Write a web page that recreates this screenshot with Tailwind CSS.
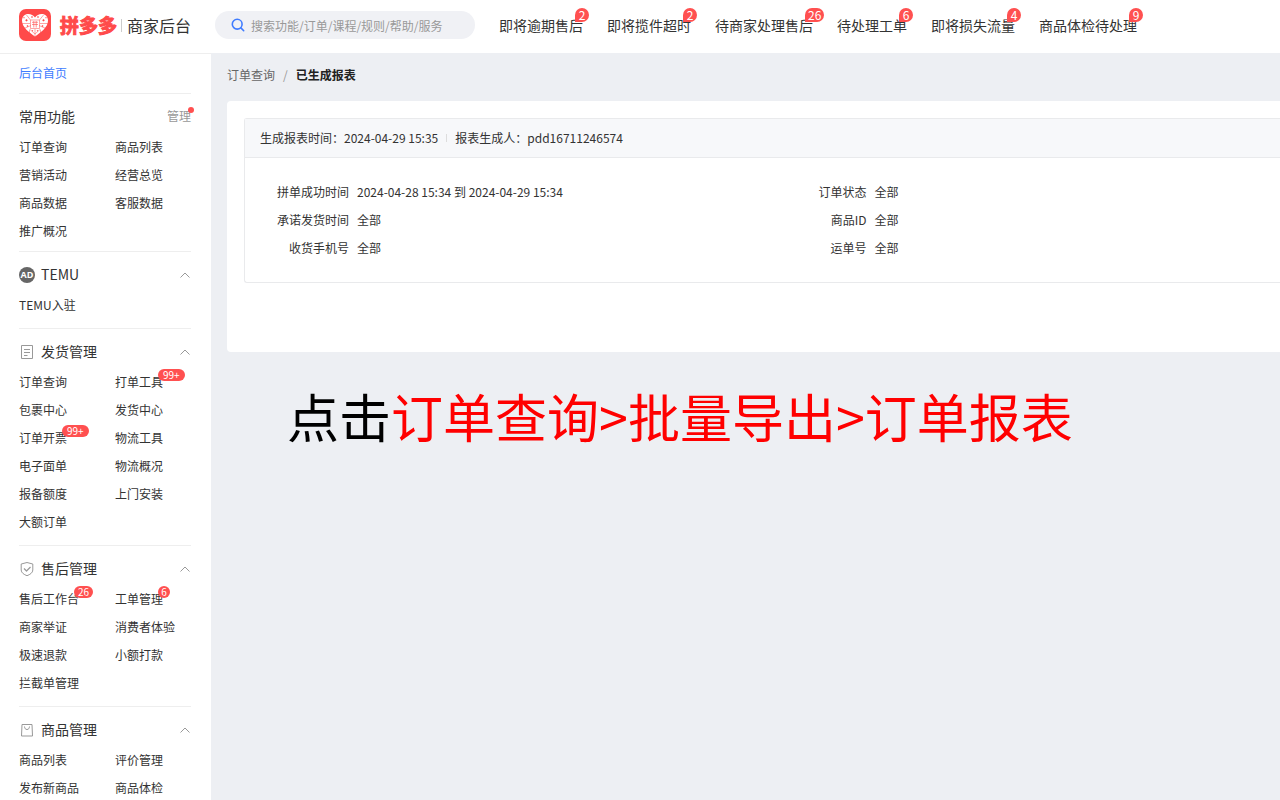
<!DOCTYPE html>
<html lang="zh-CN">
<head>
  <meta charset="UTF-8" />
  <meta name="viewport" content="width=device-width, initial-scale=1.0" />
  <title>拼多多 商家后台</title>
  <script src="https://cdn.jsdelivr.net/npm/@tailwindcss/browser@4"></script>
</head>
<body class="h-screen flex flex-col overflow-hidden bg-[#edeff3] font-['Noto_Sans_CJK_SC',sans-serif] text-xs text-[#333]">

  <!-- Shared icons -->
  <svg class="hidden" xmlns="http://www.w3.org/2000/svg">
    <symbol id="chevron" viewBox="0 0 12 12">
      <path d="M1.500 8.500 6 4l4.500 4.500" fill="none" stroke="#999" stroke-width="1" />
    </symbol>
  </svg>

  <!-- Header -->
  <header class="h-[53px] shrink-0 flex items-center bg-white pl-[19px] pb-[3px] whitespace-nowrap">
    <a href="#" class="w-49 shrink-0 flex items-center">
      <svg class="size-8 shrink-0" viewBox="0 0 32 32">
        <rect width="32" height="32" rx="7" fill="#ff4a4a" />
        <path d="M16 27.500C10.500 23.800 3 18.500 3 11.600 3 7.600 5.800 5 9.300 5c2.800 0 5.100 1.300 6.700 3.500C17.600 6.300 19.900 5 22.700 5 26.200 5 29 7.600 29 11.600 29 18.500 21.500 23.800 16 27.500z" fill="#fff" />
        <g fill="none" stroke="#ff4a4a" stroke-width=".5">
          <path d="M3 14.500h8M21 14.500h8M7.500 6l4 5M24.500 6l-4 5M5 19.500l7-3M27 19.500l-7-3M10.500 20.500v3.500M21.500 20.500v3.500M16 20v7M11 20.500 16 25l5-4.500" />
          <path d="M11.500 11h9v8.500h-9z" />
        </g>
        <g fill="#ff4a4a">
          <path d="m7.500 10 1.300 1.300-1.300 1.300-1.300-1.300zM24.500 10l1.300 1.300-1.300 1.300-1.300-1.300zM13 7l1 1-1 1-1-1zM19 7l1 1-1 1-1-1zM5 8l.8.8-.8.8-.8-.8zM27 8l.8.8-.8.8-.8-.8zM8.500 16l1 1-1 1-1-1zM23.500 16l1 1-1 1-1-1zM13.500 21l.8.8-.8.8-.8-.8zM18.500 21l.8.8-.8.8-.8-.8z" />
        </g>
        <path d="M13 13.300h6M13 15.500h6M14.800 12v6.500M17.200 12v6.500" fill="none" stroke="#ff4a4a" stroke-width=".6" />
      </svg>
      <span class="ml-[9px] pb-px text-[19px] leading-7 font-bold text-[#ff4a4a] [-webkit-text-stroke:1px_#ff4a4a]">拼多多</span>
      <span class="ml-1 w-px h-[13px] bg-[#ccc]"></span>
      <span class="ml-[5px] text-base leading-7">商家后台</span>
    </a>
    <label class="w-65 h-7 shrink-0 flex items-center rounded-full bg-[#f0f1f5] pl-4">
      <svg class="size-[14px] shrink-0" viewBox="0 0 14 14" fill="none" stroke="#407cff" stroke-width="1.600" stroke-linecap="round">
        <circle cx="6.200" cy="6.200" r="4.900" />
        <path d="m9.900 9.900 2.800 2.800" />
      </svg>
      <input type="text" aria-label="搜索" placeholder="搜索功能/订单/课程/规则/帮助/服务" class="ml-1.5 h-full flex-1 min-w-0 bg-transparent outline-none placeholder:text-[#999]" />
    </label>
    <nav class="ml-6 flex gap-6 text-sm leading-7">
      <a href="#" class="relative">即将逾期售后<span class="absolute left-full -top-[3px] -ml-2 min-w-[14px] h-[14px] rounded-full rounded-bl-xs bg-[#ff5050] px-[3px] text-center text-xs leading-[14px] text-white">2</span></a>
      <a href="#" class="relative">即将揽件超时<span class="absolute left-full -top-[3px] -ml-2 min-w-[14px] h-[14px] rounded-full rounded-bl-xs bg-[#ff5050] px-[3px] text-center text-xs leading-[14px] text-white">2</span></a>
      <a href="#" class="relative">待商家处理售后<span class="absolute left-full -top-[3px] -ml-2 min-w-[14px] h-[14px] rounded-full rounded-bl-xs bg-[#ff5050] px-[3px] text-center text-xs leading-[14px] text-white">26</span></a>
      <a href="#" class="relative">待处理工单<span class="absolute left-full -top-[3px] -ml-2 min-w-[14px] h-[14px] rounded-full rounded-bl-xs bg-[#ff5050] px-[3px] text-center text-xs leading-[14px] text-white">6</span></a>
      <a href="#" class="relative">即将损失流量<span class="absolute left-full -top-[3px] -ml-2 min-w-[14px] h-[14px] rounded-full rounded-bl-xs bg-[#ff5050] px-[3px] text-center text-xs leading-[14px] text-white">4</span></a>
      <a href="#" class="relative">商品体检待处理<span class="absolute left-full -top-[3px] -ml-2 min-w-[14px] h-[14px] rounded-full rounded-bl-xs bg-[#ff5050] px-[3px] text-center text-xs leading-[14px] text-white">9</span></a>
    </nav>
  </header>

  <div class="flex flex-1 min-h-0">
    <!-- Sidebar -->
    <aside class="w-[211px] shrink-0 overflow-hidden border-t border-[#eee] bg-white pl-[19px] pr-5 leading-7">
      <a href="#" class="block h-[39px] pt-[5px] text-[#407cff]">后台首页</a>

      <section class="border-t border-[#eee] pt-[9px] pb-1.5">
        <div class="flex items-center justify-between mb-0.5">
          <h2 class="pb-0.5 text-sm leading-[26px]">常用功能</h2>
          <a href="#" class="relative pb-0.5 leading-[26px] text-[#999]">管理<span class="absolute -right-[3px] top-1 size-1.5 rounded-full bg-[#ff5050]"></span></a>
        </div>
        <ul class="grid grid-cols-[96px_1fr]">
          <li><a href="#">订单查询</a></li>
          <li><a href="#">商品列表</a></li>
          <li><a href="#">营销活动</a></li>
          <li><a href="#">经营总览</a></li>
          <li><a href="#">商品数据</a></li>
          <li><a href="#">客服数据</a></li>
          <li><a href="#">推广概况</a></li>
        </ul>
      </section>

      <section class="border-t border-[#eee] pt-[9px] pb-[9px]">
        <button type="button" class="w-full flex items-center mb-0.5">
          <span class="size-4 rounded-full bg-[#666] text-center font-['Open_Sans',sans-serif] text-[9px] leading-4 font-bold text-white">AD</span>
          <span class="ml-1.5 pb-0.5 text-sm leading-[26px]">TEMU</span>
          <svg class="ml-auto size-3"><use href="#chevron" /></svg>
        </button>
        <ul class="grid grid-cols-[96px_1fr]">
          <li><a href="#">TEMU入驻</a></li>
        </ul>
      </section>

      <section class="border-t border-[#eee] pt-[9px] pb-[9px]">
        <button type="button" class="w-full flex items-center mb-0.5">
          <svg class="size-4" viewBox="0 0 16 16" fill="none" stroke="#999" stroke-width="1">
            <path d="M2.500 1.500h11v13h-11zM5 5.500h6M5 8.500h6M5 11.500h3.500" />
          </svg>
          <span class="ml-1.5 pb-0.5 text-sm leading-[26px]">发货管理</span>
          <svg class="ml-auto size-3"><use href="#chevron" /></svg>
        </button>
        <ul class="grid grid-cols-[96px_1fr]">
          <li><a href="#">订单查询</a></li>
          <li><a href="#" class="relative inline-block">打单工具<span class="absolute left-full top-px -ml-[5px] h-3 min-w-3 rounded-full bg-[#ff5050] px-[5px] text-center text-[10px] leading-3 text-white">99+</span></a></li>
          <li><a href="#">包裹中心</a></li>
          <li><a href="#">发货中心</a></li>
          <li><a href="#" class="relative inline-block">订单开票<span class="absolute left-full top-px -ml-[5px] h-3 min-w-3 rounded-full bg-[#ff5050] px-[5px] text-center text-[10px] leading-3 text-white">99+</span></a></li>
          <li><a href="#">物流工具</a></li>
          <li><a href="#">电子面单</a></li>
          <li><a href="#">物流概况</a></li>
          <li><a href="#">报备额度</a></li>
          <li><a href="#">上门安装</a></li>
          <li><a href="#">大额订单</a></li>
        </ul>
      </section>

      <section class="border-t border-[#eee] pt-[9px] pb-[9px]">
        <button type="button" class="w-full flex items-center mb-0.5">
          <svg class="size-4" viewBox="0 0 16 16" fill="none" stroke="#999" stroke-width="1" stroke-linejoin="round">
            <path d="M8 1.500 13.800 3v6c0 2.800-2.700 4.500-5.800 5.700C4.900 13.500 2.200 11.800 2.200 9V3z" />
            <path d="m5 7.500 2.500 2.500L11.500 6" stroke-width="1.200" />
          </svg>
          <span class="ml-1.5 pb-0.5 text-sm leading-[26px]">售后管理</span>
          <svg class="ml-auto size-3"><use href="#chevron" /></svg>
        </button>
        <ul class="grid grid-cols-[96px_1fr]">
          <li><a href="#" class="relative inline-block">售后工作台<span class="absolute left-full top-px -ml-[5px] h-3 min-w-3 rounded-full bg-[#ff5050] px-1 text-center text-[10px] leading-3 text-white">26</span></a></li>
          <li><a href="#" class="relative inline-block">工单管理<span class="absolute left-full top-px -ml-[5px] h-3 min-w-3 rounded-full bg-[#ff5050] px-[3px] text-center text-[10px] leading-3 text-white">6</span></a></li>
          <li><a href="#">商家举证</a></li>
          <li><a href="#">消费者体验</a></li>
          <li><a href="#">极速退款</a></li>
          <li><a href="#">小额打款</a></li>
          <li><a href="#">拦截单管理</a></li>
        </ul>
      </section>

      <section class="border-t border-[#eee] pt-[9px] pb-[9px]">
        <button type="button" class="w-full flex items-center mb-0.5">
          <svg class="size-4" viewBox="0 0 16 16" fill="none" stroke="#999" stroke-width="1">
            <path d="M3 2.500h10l.5 11.500h-11z" />
            <path d="M5.500 4.500C5.700 6.500 6.500 7.500 8 7.500s2.300-1 2.500-3" />
          </svg>
          <span class="ml-1.5 pb-0.5 text-sm leading-[26px]">商品管理</span>
          <svg class="ml-auto size-3"><use href="#chevron" /></svg>
        </button>
        <ul class="grid grid-cols-[96px_1fr]">
          <li><a href="#">商品列表</a></li>
          <li><a href="#">评价管理</a></li>
          <li><a href="#">发布新商品</a></li>
          <li><a href="#">商品体检</a></li>
        </ul>
      </section>
    </aside>

    <!-- Content -->
    <main class="flex-1 min-w-0 pl-4">
      <nav class="h-12 flex items-center gap-2 pb-1">
        <a href="#" class="text-[#666]">订单查询</a>
        <span class="text-[#999]">/</span>
        <span class="font-bold text-[#222]">已生成报表</span>
      </nav>

      <div class="rounded-l bg-white pt-[17px] pl-[17px] pb-[69px]">
        <div class="rounded-l-[3px] border border-r-0 border-[#e9eaec]">
          <div class="h-[39px] flex items-center border-b border-[#e9eaec] bg-[#f7f8fa] pl-[15px]">
            <span>生成报表时间：2024-04-29 15:35</span>
            <span class="mx-2 w-px h-2 bg-[#ddd]"></span>
            <span>报表生成人：pdd16711246574</span>
          </div>
          <dl class="grid grid-cols-2 py-5 leading-7">
            <div class="flex gap-2"><dt class="w-26 text-right">拼单成功时间</dt><dd>2024-04-28 15:34 到 2024-04-29 15:34</dd></div>
            <div class="flex gap-2"><dt class="w-26 text-right">订单状态</dt><dd>全部</dd></div>
            <div class="flex gap-2"><dt class="w-26 text-right">承诺发货时间</dt><dd>全部</dd></div>
            <div class="flex gap-2"><dt class="w-26 text-right">商品ID</dt><dd>全部</dd></div>
            <div class="flex gap-2"><dt class="w-26 text-right">收货手机号</dt><dd>全部</dd></div>
            <div class="flex gap-2"><dt class="w-26 text-right">运单号</dt><dd>全部</dd></div>
          </dl>
        </div>
      </div>

      <p class="pt-7 pl-15 text-[52px] leading-18 text-black">点击<span class="text-[#ff0000]">订单查询&gt;批量导出&gt;订单报表</span></p>
    </main>
  </div>
</body>
</html>
